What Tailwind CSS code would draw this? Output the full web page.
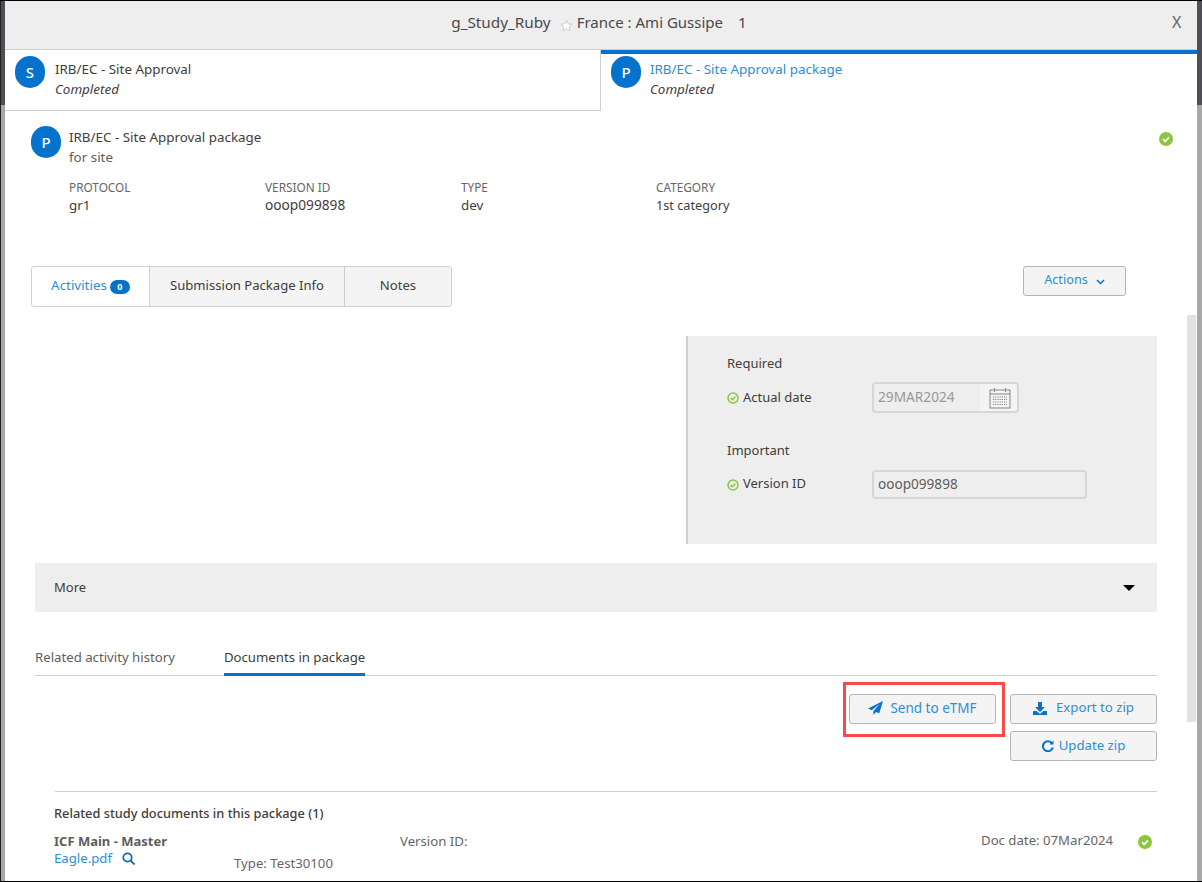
<!DOCTYPE html>
<html lang="en">
<head>
  <meta charset="UTF-8">
  <title>g_Study_Ruby</title>
  <script src="https://cdn.jsdelivr.net/npm/@tailwindcss/browser@4"></script>
</head>
<body class="bg-white font-['Noto_Sans','Open_Sans',sans-serif] text-[13.4px] text-[#3f3d3a]">
  <div class="relative w-[1202px] h-[882px] overflow-hidden flex border-t border-b border-black">
    <!-- window edges -->
    <div class="w-[5px] shrink-0 flex flex-col border-l border-[#222]">
      <div class="h-[104px] bg-[#4f4f55]"></div>
      <div class="flex-1 bg-[#a8a8a8]"></div>
    </div>

    <main class="w-[1192px] shrink-0">
      <header class="relative h-[49px] bg-[#eeeeee] border-b border-[#cfcfcf] flex items-center justify-center text-[15.300px] text-[#4a4a4a] pb-[6px]">
        <span class="ml-[-4px]">g_Study_Ruby</span>
        <svg class="w-[13px] h-[13px] ml-[9px] mr-[4px] mt-[7px]" viewBox="0 0 24 24" fill="#fff" stroke="#c9c9c9" stroke-width="1.6"><path d="M12 2l3 7 7.500 .6-5.700 4.900 1.800 7.500-6.600-4-6.600 4 1.800-7.500-5.700-4.900 7.500-.6z"/></svg>
        <span class="text-[15px]">France : Ami Gussipe</span>
        <span class="ml-[15px]">1</span>
        <span class="absolute left-[1167px] top-[9px] text-[16px] text-[#666]">X</span>
      </header>

      <!-- step tabs -->
      <div class="flex h-[61px]">
        <div class="w-[596px] border-r border-b border-[#cfcfcf] flex gap-[10px] pl-[10px] pt-[4px]">
          <div class="w-[30px] h-[32px] rounded-full bg-[#0572ce] text-white flex items-center justify-center text-[15px] font-medium mt-[2px]">S</div>
          <div class="pt-[4px]">
            <div class="leading-[20px] pt-[1px]">IRB/EC - Site Approval</div>
            <div class="leading-[20px] italic">Completed</div>
          </div>
        </div>
        <div class="flex-1 border-t-[5px] border-[#0572ce] flex gap-[9px] pl-[10px] mt-[-1px]">
          <div class="w-[30px] h-[32px] rounded-full bg-[#0572ce] text-white flex items-center justify-center text-[15px] font-medium mt-[2px]">P</div>
          <div class="pt-[4px]">
            <div class="leading-[20px] pt-[1px] text-[#2b8fd6]">IRB/EC - Site Approval package</div>
            <div class="leading-[20px] italic">Completed</div>
          </div>
        </div>
      </div>

      <!-- package summary -->
      <section class="relative pl-[26px] pt-[14px] h-[155px]">
        <div class="flex gap-[8px]">
          <div class="w-[30px] h-[32px] rounded-full bg-[#0572ce] text-white flex items-center justify-center text-[15px] font-medium mt-[1px]">P</div>
          <div>
            <div class="leading-[20px] pt-[2px]">IRB/EC - Site Approval package</div>
            <div class="leading-[20px] text-[#5f5d5a]">for site</div>
          </div>
        </div>
        <div class="grid grid-cols-[196px_196px_195px_200px] ml-[38px] mt-[11px]">
          <div><div class="text-[11.800px] leading-[18px] text-[#666]">PROTOCOL</div><div class="leading-[18px]">gr1</div></div>
          <div><div class="text-[11.800px] leading-[18px] text-[#666]">VERSION ID</div><div class="leading-[18px] text-[13.700px]">ooop099898</div></div>
          <div><div class="text-[11.800px] leading-[18px] text-[#666]">TYPE</div><div class="leading-[18px]">dev</div></div>
          <div><div class="text-[11.800px] leading-[18px] text-[#666]">CATEGORY</div><div class="leading-[18px] text-[12.700px]">1st category</div></div>
        </div>
        <svg class="absolute left-[1154px] top-[21px] w-[14px] h-[14px]" viewBox="0 0 14 14"><circle cx="7" cy="7" r="7" fill="#8cc63f"/><path d="M4 7.200l2.200 2.200 3.800-4" fill="none" stroke="#fff" stroke-width="1.800"/></svg>
      </section>

      <!-- activity tabs -->
      <div class="flex justify-between items-start pl-[26px] pr-[71px] h-[70px]">
        <div class="flex h-[41px] w-[421px] border border-[#cfcfcf] rounded-[3px] overflow-hidden text-[13.100px]">
          <div class="w-[117px] flex items-center justify-center gap-[3px] text-[#2b8fd6] text-[13.400px] pb-[2px]">Activities <span class="w-[20px] h-[14px] rounded-full bg-[#0572ce] text-white text-[9px] font-bold flex items-center justify-center mt-[2px]">0</span></div>
          <div class="w-[195px] flex items-center justify-center bg-[#f4f4f4] border-l border-[#cfcfcf] pb-[2px]">Submission Package Info</div>
          <div class="flex-1 flex items-center justify-center bg-[#f4f4f4] border-l border-[#cfcfcf] pb-[2px]">Notes</div>
        </div>
        <div class="w-[103px] h-[30px] bg-[#f4f4f4] border border-[#b5b5b5] rounded-[3px] flex items-center justify-center gap-[8px] text-[12.700px] text-[#2b8fd6] pb-[2px]">
          Actions
          <svg class="w-[9px] h-[6px] mt-[3px]" viewBox="0 0 9 6" fill="none" stroke="#0572ce" stroke-width="1.500"><path d="M1 1l3.500 3.500L8 1"/></svg>
        </div>
      </div>

      <!-- form panel -->
      <div class="pl-[681px] text-[13px]">
        <div class="w-[471px] h-[208px] bg-[#eeeeee] border-l-2 border-[#cfcfcf] pl-[39px] pt-[17px]">
          <div class="leading-[20px]">Required</div>
          <div class="flex items-center mt-[9px]">
            <svg class="w-[12px] h-[12px]" viewBox="0 0 12 12" fill="none" stroke="#8cc63f" stroke-width="1.500"><circle cx="6" cy="6" r="5"/><path d="M3.600 6.100l1.800 1.700 3-3"/></svg>
            <span class="ml-[4px] w-[129px]">Actual date</span>
            <div class="w-[147px] h-[31px] border-2 border-[#d6d6d6] rounded-[4px] flex items-stretch">
              <div class="flex-1 pl-[4px] flex items-center text-[13.700px] text-[#999]">29MAR2024</div>
              <div class="w-[37px] bg-[#f4f4f4] flex items-center justify-center pl-[3px] rounded-r-[3px]">
                <svg class="w-[22px] h-[22px]" viewBox="0 0 22 22" fill="none" stroke="#8a8583"><rect x="1" y="3" width="20" height="18"/><path d="M1 7h20M5.500 1v4M16.500 1v4"/><path d="M4 10h14M4 12.500h14M4 15h14M4 17.500h14" stroke-dasharray="1.200 1"/></svg>
              </div>
            </div>
          </div>
          <div class="leading-[20px] mt-[27px]">Important</div>
          <div class="flex items-start mt-[10px]">
            <svg class="w-[12px] h-[12px] mt-[9px]" viewBox="0 0 12 12" fill="none" stroke="#8cc63f" stroke-width="1.500"><circle cx="6" cy="6" r="5"/><path d="M3.600 6.100l1.800 1.700 3-3"/></svg>
            <span class="ml-[4px] w-[129px] leading-[20px] mt-[3px]">Version ID</span>
            <div class="w-[215px] h-[29px] border-2 border-[#d6d6d6] rounded-[4px] pl-[4px] flex items-center text-[13.600px] text-[#5f5d5a]">ooop099898</div>
          </div>
        </div>
      </div>

      <!-- more -->
      <div class="ml-[30px] mt-[19px] w-[1122px] h-[49px] bg-[#eeeeee] flex items-center justify-between pl-[19px] pr-[22px] text-[13px]">
        <span>More</span>
        <span class="w-0 h-0 border-x-[6.500px] border-x-transparent border-t-[6px] border-t-black"></span>
      </div>

      <!-- document tabs -->
      <div class="ml-[30px] mt-[34px] w-[1122px] h-[30px] border-b border-[#cfcfcf] flex gap-[49px] text-[13.200px]">
        <div class="leading-[22px] text-[#5f5d5a]">Related activity history</div>
        <div class="h-[30px] leading-[22px] border-b-[3px] border-[#0572ce]">Documents in package</div>
      </div>

      <!-- buttons -->
      <div class="flex justify-end items-start mt-[6px] pr-[40px] h-[109px]">
        <div class="border-[3px] border-[#f44b4b] pt-[9px] pb-[10px] pl-[3px] pr-[6px] mr-[5px]">
          <div class="w-[147px] h-[30px] bg-[#f4f4f4] border border-[#b5b5b5] rounded-[3px] flex items-center justify-center gap-[7px] text-[#2b8fd6] text-[13.500px] pb-[2px]">
            <svg class="w-[15px] h-[14px]" viewBox="0 0 14 13" fill="#0572ce"><path d="M14 0L0 7l3.500 1.500L11 2.500 5 9.500V13l2.500-2.800 3 1.300z"/></svg>
            Send to eTMF
          </div>
        </div>
        <div class="flex flex-col gap-[7px] mt-[12px] text-[13.200px]">
          <div class="w-[147px] h-[30px] bg-[#f4f4f4] border border-[#b5b5b5] rounded-[3px] flex items-center justify-center gap-[9px] text-[#2b8fd6] pb-[2px]">
            <svg class="w-[14px] h-[13px]" viewBox="0 0 14 13" fill="#0572ce"><path d="M5 0h4v5h3L7 10 2 5h3z"/><path d="M0 9h3.500L7 12l3.500-3H14v4H0z"/></svg>
            Export to zip
          </div>
          <div class="w-[147px] h-[30px] bg-[#f4f4f4] border border-[#b5b5b5] rounded-[3px] flex items-center justify-center gap-[5px] text-[#2b8fd6] pb-[1px]">
            <svg class="w-[12px] h-[12px]" viewBox="0 0 12 12" fill="none" stroke="#0572ce" stroke-width="2"><path d="M10 3.300A5 5 0 1 0 10.800 7.500"/><path d="M11.500 .5v4h-4z" fill="#0572ce" stroke="none"/></svg>
            Update zip
          </div>
        </div>
      </div>

      <!-- related documents -->
      <section class="ml-[50px] w-[1102px] border-t border-[#cfcfcf] pt-[11px] text-[13.200px]">
        <div class="font-medium text-[12.800px] leading-[20px] ml-[-1px]">Related study documents in this package (1)</div>
        <div class="grid grid-cols-[180px_166px_581px_1fr] mt-[9px] ml-[-1px]">
          <div>
            <div class="font-bold text-[13px] leading-[18px] text-[#5f5d5a]">ICF Main - Master</div>
            <div class="flex items-center gap-[10px] leading-[16px] text-[#2b8fd6]">Eagle.pdf
              <svg class="w-[13px] h-[13px]" viewBox="0 0 13 13" fill="none" stroke="#0b6aa8" stroke-width="1.800"><circle cx="5.500" cy="5.500" r="4.200"/><path d="M8.500 8.500L12.500 12.500"/></svg>
            </div>
          </div>
          <div class="pt-[22px] leading-[18px] text-[#666]">Type: Test30100</div>
          <div class="leading-[18px] text-[#666]">Version ID:</div>
          <div class="flex text-[#666] leading-[18px] mt-[-1px]">
            <span>Doc date: 07Mar2024</span>
            <svg class="w-[14px] h-[14px] ml-[25px] mt-[4px]" viewBox="0 0 14 14"><circle cx="7" cy="7" r="7" fill="#8cc63f"/><path d="M4 7.200l2.200 2.200 3.800-4" fill="none" stroke="#fff" stroke-width="1.800"/></svg>
          </div>
        </div>
      </section>
    </main>

    <div class="w-[5px] shrink-0 flex flex-col">
      <div class="h-[104px] bg-[#4f4f55]"></div>
      <div class="flex-1 bg-[#a8a8a8]"></div>
    </div>

    <!-- scrollbar -->
    <div class="absolute left-[1187px] top-[314px] w-[9px] h-[407px] bg-[#e2e2e2]"></div>
  </div>
</body>
</html>
